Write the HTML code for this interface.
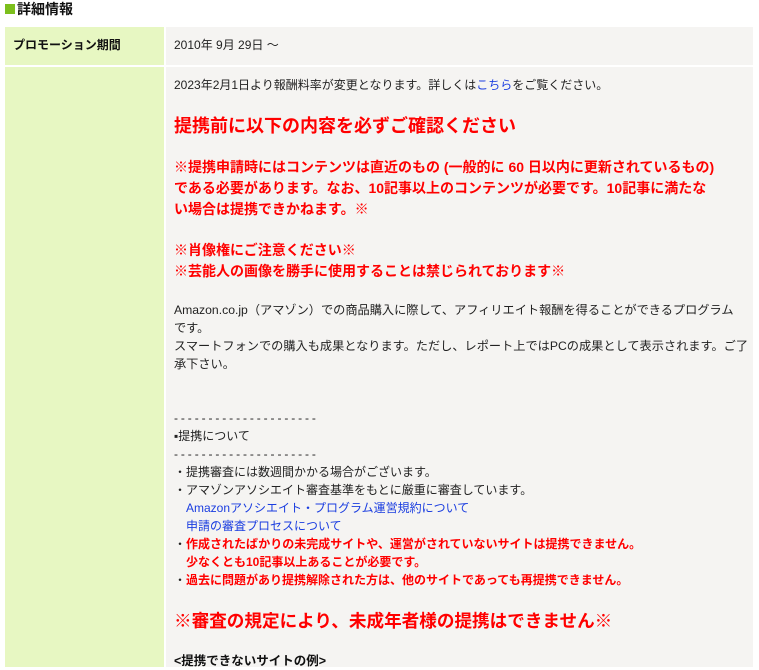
<!DOCTYPE html>
<html><head><meta charset="utf-8"><style>
body{margin:0;width:759px;height:664px;overflow:hidden;background:#fff;font-family:"Liberation Sans","Noto Sans CJK JP",sans-serif;color:#222;position:relative}
div.l{position:absolute;white-space:nowrap;left:174px}
.r{color:#f00;font-weight:bold}
a{color:#1a3de0;text-decoration:none}
.d{letter-spacing:2.9px}
.i{padding-left:12px}
</style></head><body>
<div style="position:absolute;left:5px;top:4px;width:10px;height:10px;background:#7cbf1d"></div>
<div style="position:absolute;left:17px;top:0;font-size:14px;font-weight:bold;line-height:18px;color:#111">詳細情報</div>
<div style="position:absolute;left:5px;top:27px;width:159px;height:38px;background:#e7f7c2"></div>
<div style="position:absolute;left:166px;top:27px;width:587px;height:38px;background:#f5f4f2"></div>
<div style="position:absolute;left:5px;top:67px;width:159px;height:600px;background:#e7f7c2"></div>
<div style="position:absolute;left:166px;top:67px;width:587px;height:600px;background:#f5f4f2"></div>
<div class="l" style="left:13px;top:37px;font-size:12px;font-weight:bold;line-height:16px;color:#111">プロモーション期間</div>
<div class="l" style="top:37px;font-size:12px;line-height:16px">2010年 9月 29日 〜</div>
<div class="l" style="top:77px;font-size:12px;line-height:16px">2023年2月1日より報酬料率が変更となります。詳しくは<a>こちら</a>をご覧ください。</div>
<div class="l r" style="top:115px;font-size:18px;line-height:22px">提携前に以下の内容を必ずご確認ください</div>
<div class="l r" style="top:157px;font-size:14px;line-height:21px">※提携申請時にはコンテンツは直近のもの (一般的に 60 日以内に更新されているもの)<br>である必要があります。なお、10記事以上のコンテンツが必要です。10記事に満たな<br>い場合は提携できかねます。※</div>
<div class="l r" style="top:240px;font-size:14px;line-height:21px">※肖像権にご注意ください※<br>※芸能人の画像を勝手に使用することは禁じられております※</div>
<div class="l" style="top:301px;font-size:12.2px;line-height:18px">Amazon.co.jp（アマゾン）での商品購入に際して、アフィリエイト報酬を得ることができるプログラム<br>です。<br>スマートフォンでの購入も成果となります。ただし、レポート上ではPCの成果として表示されます。ご了<br>承下さい。</div>
<div class="l" style="top:409px;font-size:12px;line-height:18px"><span class="d">---------------------</span><br>▪提携について<br><span class="d">---------------------</span><br>・提携審査には数週間かかる場合がございます。<br>・アマゾンアソシエイト審査基準をもとに厳重に審査しています。<br><a class="i">Amazonアソシエイト・プログラム運営規約について</a><br><a class="i">申請の審査プロセスについて</a><br>・<span class="r">作成されたばかりの未完成サイトや、運営がされていないサイトは提携できません。</span><br><span class="r i">少なくとも10記事以上あることが必要です。</span><br>・<span class="r">過去に問題があり提携解除された方は、他のサイトであっても再提携できません。</span></div>
<div class="l r" style="top:610px;font-size:17.6px;line-height:22px">※審査の規定により、未成年者様の提携はできません※</div>
<div class="l" style="top:652px;font-size:12.5px;font-weight:bold;line-height:18px;color:#111">&lt;提携できないサイトの例&gt;</div>
</body></html>
